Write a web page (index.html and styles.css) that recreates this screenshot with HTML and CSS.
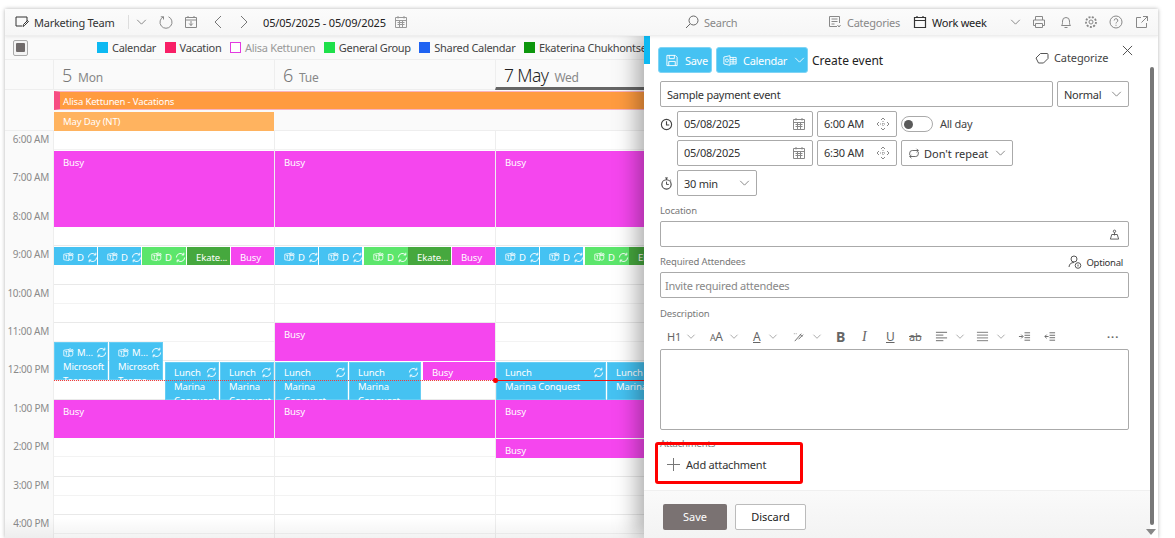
FILE: index.html
```html
<!DOCTYPE html>
<html lang="en">
<head>
<meta charset="utf-8">
<title>Marketing Team</title>
<link rel="stylesheet" href="styles.css">
</head>
<body>
<svg class="sprite" xmlns="http://www.w3.org/2000/svg">
  <symbol id="sync" viewBox="0 0 12 12"><path d="M1.500 6a4.500 4.500 0 0 1 7.800-3M10.500 6a4.500 4.500 0 0 1-7.800 3M9.600 .8v2.400H7.200M2.400 11.200V8.800h2.400" fill="none" stroke="currentColor"/></symbol>
  <symbol id="teams" viewBox="0 0 14 12"><path d="M1 2.500l6.500-1v9l-6.500-1zM7.500 4h5v3.500a2.500 2.500 0 0 1-5 0" fill="none" stroke="currentColor"/><circle cx="9" cy="2" r="1.400" fill="none" stroke="currentColor"/><circle cx="12" cy="2.600" r="1" fill="none" stroke="currentColor"/><path d="M2.800 4.200h3M4.300 4.200v4" stroke="currentColor"/></symbol>
  <symbol id="chev" viewBox="0 0 12 7"><path d="M1 1l5 5 5-5" fill="none" stroke="currentColor"/></symbol>
  <symbol id="cal" viewBox="0 0 14 14"><path d="M1.500 2.500h11v10h-11zM1.500 5.500h11M4 1v2.500M10 1v2.500M3.500 7.500h7M3.500 9.500h7M5.500 6v6M8.500 6v6" fill="none" stroke="currentColor"/></symbol>
  <symbol id="spin" viewBox="0 0 14 14"><path d="M5 3l2-2 2 2M5 11l2 2 2-2M3 5L1 7l2 2M11 5l2 2-2 2" fill="none" stroke="currentColor"/><path d="M4 7h6M7 4v6" stroke="currentColor" stroke-dasharray="1 1"/></symbol>
</svg>

<div class="app">
  <header class="topbar">
    <svg class="ic ic-note" viewBox="0 0 14 13"><path d="M12 6V1.500H1v9h6M8 11l.5-2L12.500 5l1 1-4 4z" fill="none" stroke="#333"/></svg>
    <span class="team">Marketing Team</span>
    <span class="divider"></span>
    <svg class="chev chev-team"><use href="#chev"/></svg>
    <svg class="ic ic-refresh" viewBox="0 0 14 14"><path d="M4.500 1.800a6 6 0 1 0 5 0M4.500 1.800V4.500M4.500 1.800H1.800" fill="none" stroke="#888"/></svg>
    <svg class="ic ic-today" viewBox="0 0 14 14"><path d="M1.500 2.500h11v10h-11zM1.500 5h11M4 1v2M10 1v2M7 6v4.500M5.200 8.500L7 10.500l1.800-2" fill="none" stroke="#888"/></svg>
    <svg class="ic ic-prev" viewBox="0 0 8 14"><path d="M7 1L1 7l6 6" fill="none" stroke="#777"/></svg>
    <svg class="ic ic-next" viewBox="0 0 8 14"><path d="M1 1l6 6-6 6" fill="none" stroke="#777"/></svg>
    <span class="range">05/05/2025 - 05/09/2025</span>
    <svg class="ic ic-rangecal"><use href="#cal"/></svg>
    <svg class="ic ic-search" viewBox="0 0 14 14"><circle cx="8.500" cy="5.500" r="4.500" fill="none" stroke="#666"/><path d="M5 9l-4 4" stroke="#666"/></svg>
    <span class="search">Search</span>
    <svg class="ic ic-cats" viewBox="0 0 14 14"><path d="M9 11.500H1.500v-10h10V8M3.500 4h6M3.500 6.500h6M3.500 9h3M9.500 10l1.500 2 1.500-2" fill="none" stroke="#888"/></svg>
    <span class="cats">Categories</span>
    <svg class="ic ic-week" viewBox="0 0 14 14"><path d="M1.500 2.500h11v10h-11zM1.500 5.500h11M4 1v2M10 1v2" fill="none" stroke="#333" stroke-width="1.200"/></svg>
    <span class="week">Work week</span>
    <svg class="chev chev-week"><use href="#chev"/></svg>
    <svg class="ic ic-print" viewBox="0 0 14 14"><path d="M3.500 5V1.500h7V5M3.500 10.500h-2V5h11v5.500h-2M3.500 8.500h7v4h-7z" fill="none" stroke="#888"/></svg>
    <svg class="ic ic-bell" viewBox="0 0 14 14"><path d="M2.500 10.500c1-1 1-2 1-4.500a3.500 3.500 0 0 1 7 0c0 2.500 0 3.500 1 4.500zM5.500 12.500h3" fill="none" stroke="#888"/></svg>
    <svg class="ic ic-gear" viewBox="0 0 14 14"><circle cx="7" cy="7" r="2" fill="none" stroke="#888"/><circle cx="7" cy="7" r="5" fill="none" stroke="#888" stroke-width="1.800" stroke-dasharray="2 1.400"/></svg>
    <svg class="ic ic-help" viewBox="0 0 14 14"><circle cx="7" cy="7" r="6" fill="none" stroke="#888"/><path d="M5.200 5.500a1.800 1.800 0 1 1 2.600 1.600c-.6.400-.8.700-.8 1.400M7 9.800v1" fill="none" stroke="#888"/></svg>
    <svg class="ic ic-open" viewBox="0 0 14 14"><path d="M6 2.500H1.500v10h10V8M8 1.500h4.500V6M12.500 1.500L6.500 7.500" fill="none" stroke="#888"/></svg>
  </header>

  <div class="legend">
    <span class="stop"><i></i></span>
    <ul class="legend-list">
      <li><b class="sw sw-cal"></b>Calendar</li>
      <li><b class="sw sw-vac"></b>Vacation</li>
      <li class="off"><b class="sw sw-alisa"></b>Alisa Kettunen</li>
      <li><b class="sw sw-gen"></b>General Group</li>
      <li><b class="sw sw-shared"></b>Shared Calendar</li>
      <li><b class="sw sw-ek"></b>Ekaterina Chukhontseva</li>
    </ul>
  </div>

  <div class="days-head">
    <div></div>
    <div class="dh"><span class="num">5</span><span class="dn">Mon</span></div>
    <div class="dh"><span class="num">6</span><span class="dn">Tue</span></div>
    <div class="dh today"><span class="num">7 May</span><span class="dn">Wed</span></div>
    <div class="dh"><span class="num">8</span><span class="dn">Thu</span></div>
  </div>

  <div class="allday">
    <div class="ad-bar vacation">Alisa Kettunen - Vacations</div>
    <div class="ad-bar mayday">May Day (NT)</div>
  </div>

  <div class="grid">
    <div class="times">
      <div>6:00 AM</div><div>7:00 AM</div><div>8:00 AM</div><div>9:00 AM</div><div>10:00 AM</div><div>11:00 AM</div><div>12:00 PM</div><div>1:00 PM</div><div>2:00 PM</div><div>3:00 PM</div><div>4:00 PM</div>
    </div>

    <div class="day">
      <div class="ev busy r-am" style="left:0;width:220px">Busy</div>
      <div class="ev blue r9" style="left:0;width:43px"><svg class="t"><use href="#teams"/></svg><span>D</span><svg class="s"><use href="#sync"/></svg></div>
      <div class="ev blue r9" style="left:44px;width:43px"><svg class="t"><use href="#teams"/></svg><span>D</span><svg class="s"><use href="#sync"/></svg></div>
      <div class="ev green r9" style="left:88px;width:44px"><svg class="t"><use href="#teams"/></svg><span>D</span><svg class="s"><use href="#sync"/></svg></div>
      <div class="ev dark r9" style="left:133px;width:43px">Ekate...</div>
      <div class="ev busy r9 nine" style="left:177px;width:43px">Busy</div>
      <div class="ev blue rteams multi" style="left:0;width:54px"><p><svg class="t"><use href="#teams"/></svg><span>M...</span><svg class="s"><use href="#sync"/></svg></p><p>Microsoft</p><p>Teams</p></div>
      <div class="ev blue rteams multi" style="left:55px;width:54px"><p><svg class="t"><use href="#teams"/></svg><span>M...</span><svg class="s"><use href="#sync"/></svg></p><p>Microsoft</p><p>Teams</p></div>
      <div class="ev blue rlunch multi" style="left:111px;width:54px"><p><span>Lunch</span><svg class="s"><use href="#sync"/></svg></p><p>Marina</p><p>Conquest</p></div>
      <div class="ev blue rlunch multi" style="left:166px;width:54px"><p><span>Lunch</span><svg class="s"><use href="#sync"/></svg></p><p>Marina</p><p>Conquest</p></div>
      <div class="ev busy r-pm" style="left:0;width:220px">Busy</div>
    </div>

    <div class="day">
      <div class="ev busy r-am" style="left:0;width:220px">Busy</div>
      <div class="ev blue r9" style="left:0;width:43px"><svg class="t"><use href="#teams"/></svg><span>D</span><svg class="s"><use href="#sync"/></svg></div>
      <div class="ev blue r9" style="left:44px;width:43px"><svg class="t"><use href="#teams"/></svg><span>D</span><svg class="s"><use href="#sync"/></svg></div>
      <div class="ev green r9" style="left:89px;width:44px"><svg class="t"><use href="#teams"/></svg><span>D</span><svg class="s"><use href="#sync"/></svg></div>
      <div class="ev dark r9" style="left:133px;width:43px">Ekate...</div>
      <div class="ev busy r9 nine" style="left:177px;width:43px">Busy</div>
      <div class="ev busy r11" style="left:0;width:220px">Busy</div>
      <div class="ev blue rlunch multi" style="left:0;width:73px"><p><span>Lunch</span><svg class="s"><use href="#sync"/></svg></p><p>Marina</p><p>Conquest</p></div>
      <div class="ev blue rlunch multi" style="left:74px;width:72px"><p><span>Lunch</span><svg class="s"><use href="#sync"/></svg></p><p>Marina</p><p>Conquest</p></div>
      <div class="ev busy r12" style="left:148px;width:72px">Busy</div>
      <div class="ev busy r-pm" style="left:0;width:220px">Busy</div>
    </div>

    <div class="day">
      <div class="ev busy r-am" style="left:0;width:220px">Busy</div>
      <div class="ev blue r9" style="left:0;width:43px"><svg class="t"><use href="#teams"/></svg><span>D</span><svg class="s"><use href="#sync"/></svg></div>
      <div class="ev blue r9" style="left:44px;width:43px"><svg class="t"><use href="#teams"/></svg><span>D</span><svg class="s"><use href="#sync"/></svg></div>
      <div class="ev green r9" style="left:89px;width:44px"><svg class="t"><use href="#teams"/></svg><span>D</span><svg class="s"><use href="#sync"/></svg></div>
      <div class="ev dark r9" style="left:133px;width:43px">Ekate...</div>
      <div class="ev blue rlunch multi" style="left:0;width:110px"><p><span>Lunch</span><svg class="s"><use href="#sync"/></svg></p><p>Marina Conquest</p></div>
      <div class="ev blue rlunch multi" style="left:111px;width:109px"><p><span>Lunch</span></p><p>Marina Conquest</p></div>
      <div class="ev busy r-pm" style="left:0;width:220px">Busy</div>
      <div class="ev busy r2" style="left:0;width:220px">Busy</div>
    </div>

    <div class="day"></div>
    <div class="now-old"></div>
    <div class="now-new"><i></i></div>
  </div>

  <div class="fade"></div>

  <aside class="panel">
    <span class="strip"></span>
    <div class="p-bar">
      <button class="tb-btn tb-save"><svg viewBox="0 0 14 14"><path d="M1.500 1.500h9l2 2v9h-11zM4 1.500v3.500h5.500V1.500M3.500 12.500V8h7v4.500" fill="none" stroke="#fff"/></svg>Save</button>
      <button class="tb-btn tb-cal"><svg viewBox="0 0 16 14"><path d="M1 3l7-1.500v11L1 11zM8 3.500h7v7.500H8M8 6h7M8 8.500h7M11.500 3.500V11" fill="none" stroke="#fff"/><circle cx="4.500" cy="7" r="1.800" fill="none" stroke="#fff"/></svg>Calendar<svg class="chev-w"><use href="#chev"/></svg></button>
      <h1>Create event</h1>
      <span class="categorize"><svg viewBox="0 0 14 12"><path d="M1 6l4.500-4.500h6.500a1 1 0 0 1 1 1v4L8.500 11H3.500z" fill="none" stroke="#555"/></svg>Categorize</span>
      <svg class="close" viewBox="0 0 12 12"><path d="M1 1l10 10M11 1L1 11" stroke="#444" fill="none"/></svg>
    </div>

    <div class="form">
      <div class="row r-subject">
        <div class="field subject">Sample payment event</div>
        <div class="field normal">Normal<svg class="chev"><use href="#chev"/></svg></div>
      </div>
      <div class="row r-dt">
        <svg class="lead" viewBox="0 0 14 14"><circle cx="7" cy="7" r="5.500" fill="none" stroke="#444" stroke-width="1.200"/><path d="M7 3.500V7.500h3" fill="none" stroke="#444" stroke-width="1.200"/></svg>
        <div class="field date">05/08/2025<svg class="fi"><use href="#cal"/></svg></div>
        <div class="field time">6:00 AM<svg class="fi"><use href="#spin"/></svg></div>
        <span class="toggle"><i></i></span>
        <span class="allday-lbl">All day</span>
      </div>
      <div class="row r-dt2">
        <div class="field date">05/08/2025<svg class="fi"><use href="#cal"/></svg></div>
        <div class="field time">6:30 AM<svg class="fi"><use href="#spin"/></svg></div>
        <div class="field repeat"><svg viewBox="0 0 14 14"><path d="M2 9V6.500A3 3 0 0 1 5 3.500h7M10 1.500l2 2-2 2M12 5v2.500a3 3 0 0 1-3 3H2M4 8.500l-2 2 2 2" fill="none" stroke="#555"/></svg>Don't repeat<svg class="chev"><use href="#chev"/></svg></div>
      </div>
      <div class="row r-dur">
        <svg class="lead" viewBox="0 0 14 14"><circle cx="7" cy="8" r="5" fill="none" stroke="#444" stroke-width="1.200"/><path d="M5.500 1h3M7 1v2M7 5v3h2.500M11 3l1 1" fill="none" stroke="#444"/></svg>
        <div class="field dur">30 min<svg class="chev"><use href="#chev"/></svg></div>
      </div>
      <label class="lbl l-loc">Location</label>
      <div class="field wide loc"><svg viewBox="0 0 12 12"><circle cx="6" cy="2.500" r="1.300" fill="none" stroke="#555"/><path d="M3 6h6l1.500 5h-9zM6 4v3" fill="none" stroke="#555"/></svg></div>
      <div class="lbl-row">
        <label class="lbl">Required Attendees</label>
        <span class="optional"><svg viewBox="0 0 14 14"><circle cx="6" cy="4" r="3" fill="none" stroke="#555"/><path d="M1 12c.3-3 2-4.500 5-4.500" fill="none" stroke="#555"/><circle cx="10" cy="10.500" r="2.800" fill="none" stroke="#555"/><path d="M10 9.500v2" stroke="#555"/></svg>Optional</span>
      </div>
      <div class="field wide attendees">Invite required attendees</div>
      <label class="lbl l-desc">Description</label>
      <div class="editor-bar">
        <span class="h1">H1</span><svg class="ec"><use href="#chev"/></svg>
        <span class="aa"><small>A</small>A</span><svg class="ec"><use href="#chev"/></svg>
        <span class="fa">A</span><svg class="ec"><use href="#chev"/></svg>
        <svg class="ei" viewBox="0 0 14 14"><path d="M3 12l7-8M7 10l5-5M9 5l2 2" fill="none" stroke="#666"/><path d="M2 4h4" stroke="#999" stroke-dasharray="1 1"/></svg><svg class="ec"><use href="#chev"/></svg>
        <b class="fb">B</b><i class="fi-i">I</i><u class="fu">U</u><s class="fs">ab</s>
        <svg class="ei" viewBox="0 0 14 14"><path d="M1 2.500h12M1 5.500h8M1 8.500h12M1 11.500h8" stroke="#666"/></svg><svg class="ec ec-a"><use href="#chev"/></svg>
        <svg class="ei" viewBox="0 0 14 14"><path d="M1 2.500h12M1 5.500h12M1 8.500h12M1 11.500h12" stroke="#777"/></svg><svg class="ec ec-b"><use href="#chev"/></svg>
        <svg class="ei ind" viewBox="0 0 14 14"><path d="M1 7h4M3.500 5l2 2-2 2M7 3h6M7 5.700h6M7 8.300h6M7 11h6" fill="none" stroke="#666"/></svg>
        <svg class="ei" viewBox="0 0 14 14"><path d="M6 7H2M4 5L2 7l2 2M7 3h6M7 5.700h6M7 8.300h6M7 11h6" fill="none" stroke="#666"/></svg>
        <span class="more">···</span>
      </div>
      <div class="field wide editor"></div>
      <label class="lbl l-att">Attachments</label>
      <div class="add"><svg viewBox="0 0 13 13"><path d="M6.500 0v13M0 6.500h13" stroke="#777"/></svg>Add attachment</div>
      <div class="highlight"></div>
    </div>

    <footer class="p-foot">
      <button class="btn-save">Save</button>
      <button class="btn-discard">Discard</button>
    </footer>
    <div class="scroll"><span class="thumb"></span><span class="arrow"></span></div>
  </aside>
</div>
</body>
</html>
```

FILE: styles.css
```css
* { box-sizing: border-box; }
html, body { margin: 0; height: 100%; overflow: hidden; background: #fff; }
body { font-family: "Noto Sans", "Open Sans", sans-serif; font-size: 11px; letter-spacing: -.25px; color: #333; }
p { margin: 0; }
.sprite { position: absolute; width: 0; height: 0; }

.app { position: relative; margin: 9px 17px 0 5px; height: 529px; overflow: hidden; background: #fff; box-shadow: 0 0 4px rgba(0,0,0,.3); }

/* top bar */
.topbar { position: relative; z-index: 5; height: 27px; display: flex; align-items: center; padding-left: 10px; background: linear-gradient(#fbfbfb, #f6f6f6); border-bottom: 1px solid #eee; box-shadow: 0 1px 3px rgba(0,0,0,.08); }
.ic { flex: none; width: 14px; height: 14px; }
.chev { flex: none; width: 11px; height: 6px; color: #777; }
.team { margin-left: 5px; width: 79px; white-space: nowrap; color: #333; }
.divider { width: 1px; height: 14px; background: #ddd; margin-left: 15px; }
.chev-team { margin-left: 7px; }
.ic-refresh { margin-left: 12px; }
.ic-today { margin-left: 11px; }
.ic-prev { margin-left: 16px; width: 8px; }
.ic-next { margin-left: 18px; width: 8px; }
.range { margin-left: 15px; width: 125px; white-space: nowrap; color: #222; letter-spacing: -.15px; }
.ic-rangecal { margin-left: 6px; color: #999; }
.ic-search { margin-left: 277px; }
.search { margin-left: 5px; color: #888; width: 50px; }
.ic-cats { margin-left: 74px; }
.cats { margin-left: 5px; color: #888; width: 52px; white-space: nowrap; }
.ic-week { margin-left: 14px; }
.week { margin-left: 5px; color: #222; width: 55px; white-space: nowrap; }
.chev-week { margin-left: 23px; }
.ic-print { margin-left: 11px; }
.ic-bell { margin-left: 13px; }
.ic-gear { margin-left: 11px; }
.ic-help { margin-left: 11px; }
.ic-open { margin-left: 12px; }

/* legend */
.legend { height: 24px; display: flex; align-items: center; padding-left: 8px; background: #fafafa; border-bottom: 1px solid #eee; }
.stop { width: 15px; height: 16px; border: 1px solid #aaa; border-radius: 2px; display: flex; align-items: center; justify-content: center; background: #f4f4f4; }
.stop i { width: 9px; height: 9px; background: #706b6b; border-radius: 1px; }
.legend-list { list-style: none; display: flex; gap: 8.500px; margin: 0 0 0 69px; padding: 0; white-space: nowrap; letter-spacing: -.3px; }
.legend-list li { display: flex; align-items: center; gap: 4px; color: #444; }
.legend-list li.off { color: #999; }
.sw { width: 11px; height: 11px; display: block; }
.sw-cal { background: #0db9f2; }
.sw-vac { background: #f81f66; }
.sw-alisa { background: #fff; border: 1.500px solid #e33ae0; }
.sw-gen { background: #1ee04a; }
.sw-shared { background: #1f63f2; }
.sw-ek { background: #0d960d; }

/* days */
.days-head { display: grid; grid-template-columns: 48px repeat(4, 221px); height: 30px; background: #fafafa; border-bottom: 1px solid #eee; }
.dh { display: flex; align-items: baseline; gap: 6px; padding: 3px 0 0 8px; border-left: 1px solid #eee; color: #777; height: 30px; }
.num { font-size: 18px; font-weight: 300; color: #777; }
.dn { font-size: 12px; color: #888; }
.today { border-bottom: 3px solid #666; height: 30px; }
.today .num { font-size: 17.500px; letter-spacing: -.6px; color: #222; }

.allday { height: 41px; padding: 1px 0 0 49px; background: #fafafa; border-bottom: 1px solid #eee; display: flex; flex-direction: column; gap: 2px; }
.ad-bar { height: 19px; line-height: 19px; padding-left: 9px; color: #fff; font-size: 9.500px; letter-spacing: -.15px; }
.vacation { width: 1000px; background: #ff9b3f; border: 1px solid #f9b3c0; border-width: 1px 0; border-left: 6px solid #f74d82; padding-left: 3px; }
.mayday { width: 220px; background: #ffb35f; }

.grid { position: relative; display: grid; grid-template-columns: 48px repeat(4, 221px); height: 420px; }
.times { background: #fafafa; }
.times div { height: 38.400px; padding: 1px 4px 0 0; text-align: right; color: #8a8a8a; font-size: 10px; line-height: 14px; }
.day { position: relative; border-left: 1px solid #eee; background: repeating-linear-gradient(#fff 0, #fff 18.200px, #f3f3f3 18.200px, #f3f3f3 19.200px, #fff 19.200px, #fff 37.400px, #e9e9e9 37.400px, #e9e9e9 38.400px); }
.ev { position: absolute; color: #fff; font-size: 9.500px; letter-spacing: -.1px; padding: 5px 0 0 9px; overflow: hidden; white-space: nowrap; }
.busy { background: #f546ee; }
.blue { background: #45c2f2; }
.green { background: #5ce66c; }
.dark { background: #46a83e; }
.r-am { top: 19.500px; height: 76.500px; }
.r9 { top: 115.500px; height: 18.500px; display: flex; align-items: center; padding: 3px 0 0 9px; gap: 3px; }
.nine { padding-left: 9px; }
.rteams { top: 211px; height: 38px; }
.rlunch { top: 231px; height: 38px; }
.r11 { top: 192px; height: 38px; }
.r12 { top: 231px; height: 18px; padding-top: 4px; }
.r-pm { top: 269px; height: 38px; }
.r2 { top: 308px; height: 19px; padding-top: 5px; }
.multi { padding: 3px 0 0 9px; line-height: 14px; box-shadow: inset 0 0 0 1px rgba(255,255,255,.18); }
.multi p:first-child { display: flex; align-items: center; gap: 3px; height: 15px; padding-right: 2px; }
.multi .s { margin-left: auto; }
.t { width: 11px; height: 10px; flex: none; }
.s { width: 11px; height: 11px; flex: none; }
.now-old { position: absolute; left: 49px; top: 249px; width: 441px; border-top: 1px dotted #f23a3a; }
.now-new { position: absolute; left: 490px; top: 248.500px; width: 160px; height: 1.500px; background: #f01010; }
.now-new i { position: absolute; left: -2px; top: -1.500px; width: 4.500px; height: 4.500px; border-radius: 50%; background: #f00; }
.fade { position: absolute; left: 0; right: 0; bottom: 0; height: 20px; background: linear-gradient(rgba(0,0,0,0), rgba(0,0,0,.05)); pointer-events: none; z-index: 3; }

/* panel */
.panel { position: absolute; z-index: 4; left: 639px; top: 27px; right: 0; bottom: 0; background: #fff; box-shadow: -6px 0 22px rgba(0,0,0,.35); display: flex; flex-direction: column; }
.strip { position: absolute; left: 0; top: 0; width: 6px; height: 28px; background: #0db9f2; }
.p-bar { display: flex; align-items: center; height: 26px; margin-top: 11px; padding-left: 14px; position: relative; flex: none; }
.tb-btn { height: 26px; border: 1px solid #7fd4f5; border-radius: 3px; background: #45c2f2; color: #fff; font: 11px "Noto Sans", sans-serif; letter-spacing: -.3px; display: flex; align-items: center; padding: 0 0 0 6px; gap: 6px; }
.tb-btn svg { width: 14px; height: 13px; flex: none; }
.tb-btn .chev-w { width: 11px; height: 6px; color: #fff; margin-left: 1px; }
.tb-save { width: 54px; }
.tb-cal { width: 92px; margin-left: 4px; }
.p-bar h1 { margin: 1px 0 0 4px; font-size: 12px; font-weight: 400; letter-spacing: 0; color: #222; white-space: nowrap; }
.categorize { position: absolute; left: 391px; top: 3px; display: flex; align-items: center; gap: 5px; color: #444; white-space: nowrap; letter-spacing: -.1px; }
.categorize svg { width: 14px; height: 12px; }
.close { position: absolute; left: 478px; top: -2px; width: 11px; height: 11px; }

.form { position: relative; flex: 1; padding: 8px 0 0 16px; width: 485px; }
.row { display: flex; align-items: center; gap: 4px; height: 26px; }
.field { height: 26px; border: 1px solid #aaa; border-radius: 2px; background: #fff; display: flex; align-items: center; padding: 0 6px; color: #333; white-space: nowrap; position: relative; }
.subject { width: 393px; }
.normal { width: 72px; justify-content: space-between; padding-right: 6px; }
.r-dt { margin-top: 4px; gap: 4px; }
.r-dt2 { margin-top: 3px; padding-left: 17px; }
.r-dur { margin-top: 4px; }
.lead { width: 13px; height: 13px; flex: none; }
.date { width: 136px; padding-bottom: 1px; }
.time { width: 80px; padding-bottom: 1px; }
.fi { position: absolute; right: 6px; width: 14px; height: 14px; color: #888; }
.toggle { width: 32px; height: 16px; border: 1px solid #aaa; border-radius: 8px; display: flex; align-items: center; padding-left: 2px; }
.toggle i { width: 9px; height: 9px; border-radius: 50%; background: #5a5a5a; }
.allday-lbl { margin: 0 0 1px 3px; color: #444; }
.repeat { width: 112px; padding-left: 6px; gap: 4px; letter-spacing: 0; }
.repeat svg:first-child { width: 12px; height: 13px; }
.repeat .chev { position: absolute; right: 6px; }
.dur { width: 80px; justify-content: space-between; }
.lbl { display: block; font-size: 9.500px; color: #777; line-height: 12px; letter-spacing: -.15px; }
.l-loc { margin-top: 9px; height: 16px; }
.wide { width: 469px; }
.loc { justify-content: flex-end; padding-right: 8px; }
.loc svg { width: 11px; height: 11px; }
.lbl-row { display: flex; justify-content: space-between; align-items: center; height: 25px; padding-top: 5px; width: 469px; }
.optional { display: flex; align-items: center; gap: 4px; font-size: 9.500px; color: #333; padding-right: 6px; }
.optional svg { width: 14px; height: 14px; }
.attendees { color: #888; padding: 0 0 0 4px; }
.l-desc { margin-top: 10px; height: 15px; }
.editor-bar { position: relative; display: flex; align-items: center; height: 23px; padding: 2px 0 0 7px; color: #666; margin-top: 1px; }
.editor-bar > * { flex: none; }
.ec { width: 10px; height: 5px; margin: 0 14px 0 7px; color: #888; }
.ec-a { margin-right: 11px; }
.ec-b { margin-right: 12px; }
.ei { width: 13px; height: 13px; }
.h1 { font-size: 11px; width: 12px; }
.aa { font-size: 12px; width: 12px; letter-spacing: -.5px; } .aa small { font-size: 9px; }
.fa { text-decoration: underline; font-size: 12px; width: 8px; }
.fb { font-size: 14px; width: 9px; margin-right: 17px; }
.fi-i { font-size: 14px; font-family: "Liberation Serif", serif; width: 5px; margin-right: 19px; }
.fu { font-size: 12px; width: 8px; margin-right: 15px; }
.fs { font-size: 11px; width: 13px; margin-right: 13px; }
.ind { margin-right: 12px; }
.more { position: absolute; left: 447px; font-weight: 700; letter-spacing: 1px; }
.editor { height: 81px; margin-top: 2px; }
.l-att { margin-top: 8px; }
.add { display: flex; align-items: center; gap: 6px; margin: 7px 0 0 7px; color: #333; letter-spacing: -.2px; }
.add svg { width: 13px; height: 13px; }
.highlight { position: absolute; left: 11px; top: 369px; width: 148px; height: 42px; border: 3px solid #f00; border-radius: 3px; }
.p-foot { flex: none; height: 48px; background: linear-gradient(#fafafa, #f3f3f3); border-top: 1px solid #f0f0f0; display: flex; align-items: center; gap: 8px; padding: 4px 0 0 19px; margin-right: 8px; }
.btn-save { width: 64px; height: 26px; border: 0; border-radius: 2px; background: #7a7272; color: #fff; font: 11px "Noto Sans", sans-serif; }
.btn-discard { width: 71px; height: 26px; border: 1px solid #bbb; border-radius: 2px; background: #fff; color: #222; font: 11px "Noto Sans", sans-serif; }
.scroll { position: absolute; right: 4px; top: 31px; bottom: 0; width: 4px; }
.thumb { display: block; width: 4px; height: 458px; background: #767676; border-radius: 2px; }
.arrow { position: absolute; left: -4px; top: 462px; border: 5px solid transparent; border-top: 6px solid #888; border-bottom: 0; }
```
